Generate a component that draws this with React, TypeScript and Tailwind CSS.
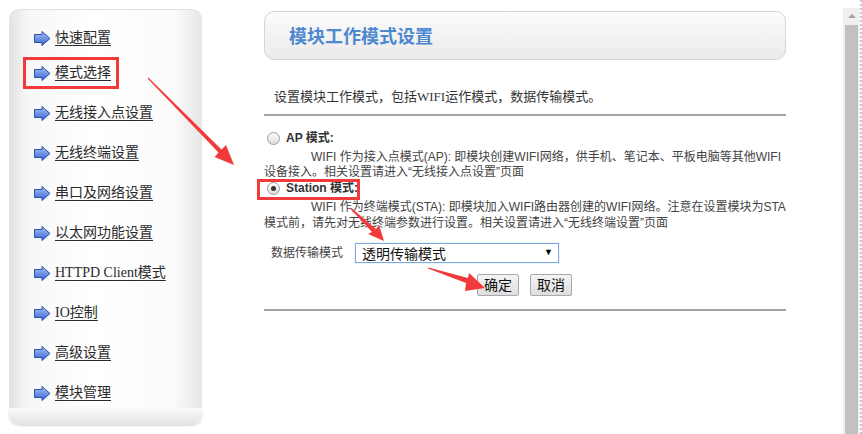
import React from "react";

const menu = [
  "快速配置",
  "模式选择",
  "无线接入点设置",
  "无线终端设置",
  "串口及网络设置",
  "以太网功能设置",
  "HTTPD Client模式",
  "IO控制",
  "高级设置",
  "模块管理",
];

const BlueArrow: React.FC = () => (
  <svg width="17" height="15" viewBox="0 0 17 15" className="shrink-0">
    <defs>
      <linearGradient id="ba" x1="0" y1="0" x2="0" y2="1">
        <stop offset="0" stopColor="#a9c3f4" />
        <stop offset="0.5" stopColor="#6f94e2" />
        <stop offset="1" stopColor="#3c63c6" />
      </linearGradient>
    </defs>
    <polygon
      points="0.5,3.5 8,3.5 8,0.5 16,7.5 8,14.5 8,11.5 0.5,11.5"
      fill="url(#ba)"
      stroke="#2c4fae"
      strokeWidth="1"
    />
  </svg>
);

const Radio: React.FC<{ checked?: boolean }> = ({ checked }) => (
  <span className="flex h-[13px] w-[13px] shrink-0 items-center justify-center rounded-full border border-[#9a9a9a] bg-[linear-gradient(#fdfdfd,#dcdcdc)]">
    {checked && <span className="h-[5px] w-[5px] rounded-full bg-[#333]" />}
  </span>
);

const App: React.FC = () => {
  return (
    <div className="relative flex h-[434px] w-[862px] overflow-hidden bg-white text-[#333]">
      {/* left menu */}
      <div className="pl-[9px] pt-[9px]">
        <div className="flex h-[416px] w-[193px] flex-col">
          <div className="flex-1 rounded-t-[10px] border-t border-[#e2e2e2] bg-[linear-gradient(to_right,#e2e2e2,#f7f7f7_10%,#ffffff_45%,#fbfbfb_85%,#e6e6e6)] pl-[25px] pt-[18px]">
            {menu.map((m, i) => (
              <div
                key={m}
                className={`flex h-[20px] items-center gap-[4px] ${i === 0 ? "" : i === 1 ? "mt-[15px]" : "mt-[20px]"}`}
              >
                <BlueArrow />
                <span className="text-[14px] leading-[20px] text-[#2a2a2a] underline underline-offset-[3px] [font-family:'Liberation_Serif','Noto_Sans_CJK_SC',serif]">
                  {m}
                </span>
              </div>
            ))}
          </div>
          <div className="h-[17px] rounded-b-[10px] bg-[linear-gradient(#f9f9f9,#e4e4e4)] shadow-[0_1px_2px_rgba(0,0,0,0.15)]" />
        </div>
      </div>

      {/* main content */}
      <div className="ml-[62px] w-[522px] pt-[11px]">
        <div className="flex h-[49px] items-center rounded-[10px] border border-[#d6d6d6] bg-[linear-gradient(#fbfbfb,#ebebeb)] pl-[24px]">
          <span className="text-[18px] font-bold text-[#4d88d0] [font-family:'Noto_Sans_CJK_SC',sans-serif]">
            模块工作模式设置
          </span>
        </div>

        <div className="mt-[29px] pl-[10px] text-[13px] leading-[16px] [font-family:'Liberation_Serif','Noto_Sans_CJK_SC',serif]">
          设置模块工作模式，包括WIFI运作模式，数据传输模式。
        </div>
        <div className="mt-[9px] h-[2px] bg-[#a3a3a3]" />

        <div className="text-[12px] text-[#444] [font-family:'Liberation_Sans','Noto_Sans_CJK_SC',sans-serif]">
          <div className="mt-[14px] flex h-[16px] items-center gap-[6px] pl-[3px]">
            <Radio />
            <span className="text-[12px] font-bold text-[#333]">AP 模式:</span>
          </div>
          <div className="mt-[4px] whitespace-nowrap leading-[15px] [text-indent:47px]">
            WIFI 作为接入点模式(AP): 即模块创建WIFI网络，供手机、笔记本、平板电脑等其他WIFI
            <br />
            设备接入。相关设置请进入“无线接入点设置”页面
          </div>

          <div className="flex h-[16px] items-center gap-[6px] pl-[3px]">
            <Radio checked />
            <span className="text-[12px] font-bold text-[#333]">Station 模式:</span>
          </div>
          <div className="mt-[3px] whitespace-nowrap leading-[16px] [text-indent:47px]">
            WIFI 作为终端模式(STA): 即模块加入WIFI路由器创建的WIFI网络。注意在设置模块为STA
            <br />
            模式前，请先对无线终端参数进行设置。相关设置请进入“无线终端设置”页面
          </div>

          <div className="mt-[12px] flex h-[20px] items-center pl-[7px]">
            <span className="w-[84px] text-[12px]">数据传输模式</span>
            <div className="flex h-[20px] w-[204px] items-center justify-between border border-[#7ea6e0] bg-white pl-[6px] pr-[5px] shadow-[0_0_1px_#9fc0ee]">
              <span className="text-[14px] text-[#111] [font-family:'Noto_Sans_CJK_SC',sans-serif]">透明传输模式</span>
              <span className="text-[9px] text-black">▼</span>
            </div>
          </div>

          <div className="ml-[213px] mt-[11px] flex gap-[11px]">
            <button className="h-[22px] w-[42px] rounded-[2px] border border-[#a9a9a9] bg-[linear-gradient(#f4f4f4,#dedede)] text-[14px] leading-[20px] text-[#111]">
              确定
            </button>
            <button className="h-[22px] w-[42px] rounded-[2px] border border-[#a9a9a9] bg-[linear-gradient(#f4f4f4,#dedede)] text-[14px] leading-[20px] text-[#111]">
              取消
            </button>
          </div>
        </div>

        <div className="mt-[13px] h-[2px] bg-[#a3a3a3]" />
      </div>

      {/* scrollbar */}
      <div className="ml-auto mt-[8px] flex w-[17px] flex-col items-center bg-[#f0f0f0]">
        <span className="mt-[6px] h-0 w-0 border-x-[4px] border-b-[4px] border-x-transparent border-b-[#a3a3a3]" />
        <div className="mt-[7px] w-[13px] flex-1 bg-[#c1c1c1]" />
      </div>
      <div className="w-[2px] border-l-2 border-dotted border-[#c8c8c8]" />

      {/* red annotations */}
      <div className="absolute left-[23px] top-[57px] h-[32px] w-[96px] border-[3px] border-[#f23a3a]" />
      <div className="absolute left-[257px] top-[179px] h-[21px] w-[103px] border-[3px] border-[#f23a3a]" />
      <svg className="pointer-events-none absolute left-0 top-0" width="862" height="434">
        <polygon
          fill="#f23a3a"
          points="147.6,78.4 148.4,77.6 221.5,149.5 226,145 234,165 214.5,157 218.5,152.5"
        />
        <polygon
          fill="#f23a3a"
          points="350,208.6 350.8,207.6 376,229 379,225 384,241 368,234 372,232"
        />
        <polygon
          fill="#f23a3a"
          points="428,268.6 428.4,267.4 468,278 469,273 485,288 465,291 466,283"
        />
      </svg>
    </div>
  );
};

export default App;
